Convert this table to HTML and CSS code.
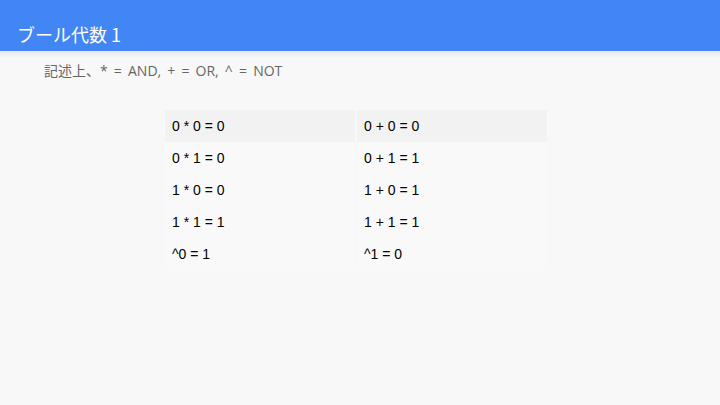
FILE: index.html
```html
<!DOCTYPE html>
<html lang="ja">
<head>
    <meta charset="UTF-8">
    <title>ブール代数 1</title>
    <link rel="stylesheet" href="styles.css">
</head>
<body>
    <div class="slide-header">
        <h1>ブール代数 1</h1>
    </div>
    <div class="header-shadow"></div>
    <p class="note">記述上、* = AND, + = OR, ^ = NOT</p>

    <table class="truth">
        <tr class="first"><td>0 * 0 = 0</td><td>0 + 0 = 0</td></tr>
        <tr><td>0 * 1 = 0</td><td>0 + 1 = 1</td></tr>
        <tr><td>1 * 0 = 0</td><td>1 + 0 = 1</td></tr>
        <tr><td>1 * 1 = 1</td><td>1 + 1 = 1</td></tr>
        <tr><td>^0 = 1</td><td>^1 = 0</td></tr>
    </table>
</body>
</html>
```

FILE: styles.css
```css
* {
    margin: 0;
    padding: 0;
    box-sizing: border-box;
}

body {
    width: 720px;
    height: 405px;
    overflow: hidden;
    background: #f8f8f8;
    font-family: "Noto Sans CJK JP", sans-serif;
}

.slide-header {
    background: #4285f4;
    height: 51px;
    padding: 21px 0 0 17px;
}

.slide-header h1 {
    color: #fff;
    font-family: "Noto Sans CJK JP", sans-serif;
    font-weight: 400;
    font-size: 18px;
    line-height: 26px;
}

.header-shadow {
    height: 7px;
    background: linear-gradient(#e6e9ef, #f8f8f8);
}

.note {
    margin: 4px 0 0 44px;
    font-size: 14px;
    line-height: 18px;
    word-spacing: 2.5px;
    color: #666;
    font-family: "Open Sans", "Noto Sans CJK JP", sans-serif;
}

.truth {
    margin: 30px 0 0 163px;
    border-collapse: separate;
    border-spacing: 2px 0;
}

.truth td {
    width: 190px;
    height: 32px;
    padding: 0 0 0 7px;
    background: #f9f9f9;
    vertical-align: middle;
    font-family: "Liberation Sans", Arial, sans-serif;
    font-size: 14px;
    color: #000;
}

.truth tr.first td {
    background: #f2f2f2;
}
```
